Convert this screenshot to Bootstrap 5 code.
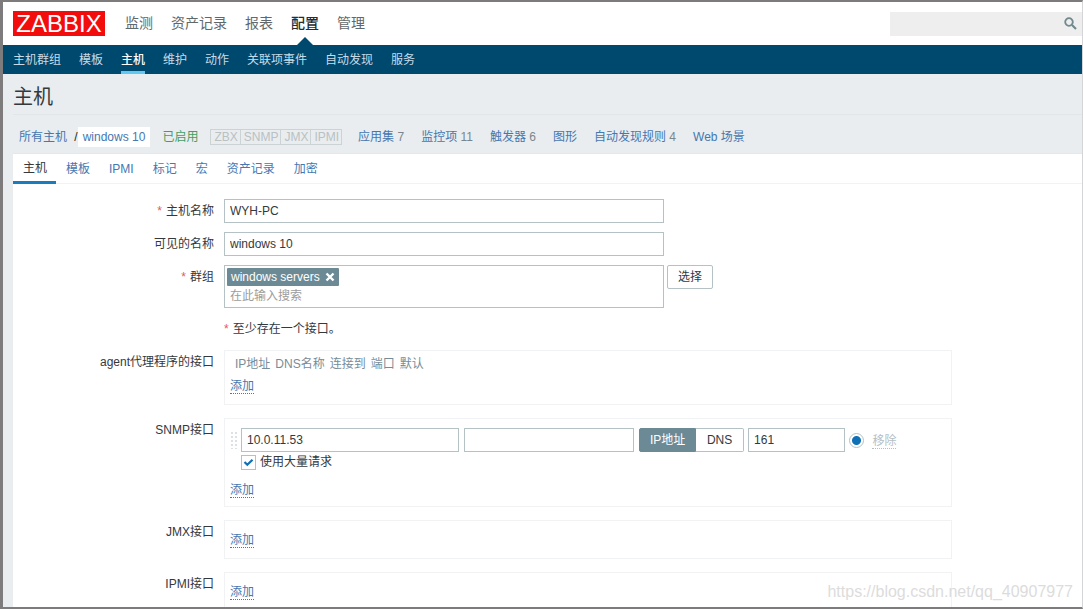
<!DOCTYPE html>
<html lang="zh-CN">
<head>
<meta charset="utf-8">
<meta name="viewport" content="width=device-width, initial-scale=1">
<title>主机</title>
<link href="https://cdn.jsdelivr.net/npm/bootstrap@5.3.0/dist/css/bootstrap.min.css" rel="stylesheet">
<style>
  body {
    font-family: "Liberation Sans", "Noto Sans CJK SC", sans-serif;
    font-size: 12px; line-height: 16px; color: #33393d; background: #fff;
  }
  a { color: #4577b0; text-decoration: none; }
  .frame { border: solid #7d7b7c; border-width: 2px 1px 2px 3px; border-right-color: #d3d5d6; background: #e9edef; }
  .topbar { height: 43px; padding-left: 10px; }
  .logo { background: #f20c0c; color: #fff; font-size: 24px; line-height: 25px; width: 92px; margin-right: 20px; }
  .main-menu { gap: 18px; font-size: 14px; line-height: 42px; height: 43px; }
  .main-menu a { color: #61686c; display: block; }
  .main-menu a.active { color: #262c30; font-weight: 500; position: relative; }
  .main-menu a.active::after {
    content: ""; position: absolute; bottom: 0; left: 50%; margin-left: -8px;
    border: 8px solid transparent; border-top: 0; border-bottom-color: #00496e;
  }
  .search-box { width: 192px; height: 24px; background: #eee; }
  .search-box input { background: none; padding: 0 6px; min-width: 0; }
  .search-box button { width: 24px; }
  .submenu { background: #00496e; gap: 18px; padding-left: 10px; height: 29px; line-height: 31px; }
  .submenu a { color: #c9dbe6; display: block; height: 29px; }
  .submenu a.active { color: #fff; font-weight: 500; border-bottom: 3px solid #62c8f0; }
  .page { padding-left: 10px; }
  h1 { font-size: 20px; line-height: 46px; height: 41px; color: #33393d; border-bottom: 1px solid #e2e6e8; font-weight: 400; }
  .crumbs { gap: 12px; padding: 11px 0 6px 6px; height: 38px; color: #7b868c; }
  .crumb-links { gap: 17px; margin-left: 4px; }
  .current-host { background: #fff; padding: 2px 5px; }
  .enabled { color: #429e61; }
  .proto { color: #b9c1c3; border: 1px solid #ccd3d5; line-height: 14px; }
  .proto span { padding: 0 2px 0 3px; }
  .proto span + span { border-left: 1px solid #ccd3d5; }
  .panel { background: #fff; border-top: 1px solid #e4e8ea; }
  .tabs { border-bottom: 1px solid #f0f2f3; line-height: 28px; }
  .tabs button { border: 0; background: none; color: #4577b0; padding: 0 9px 0 10px; height: 30px; margin-bottom: -1px; }
  .tabs button.active { color: #33393d; border-bottom: 3px solid #1a7cbd; }
  .host-form { display: grid; grid-template-columns: 201px minmax(0, 1fr); column-gap: 10px; row-gap: 9px; padding-top: 15px; }
  .row-label { text-align: right; line-height: 24px; }
  .required::before { content: "*"; color: #e45959; margin-right: 4px; }
  .field { border: 1px solid #b4c1c5; border-radius: 0; height: 24px; padding: 0 5px; color: #33393d; background: #fff; }
  .wide { width: 100%; max-width: 440px; }
  .multi { border: 1px solid #b4c1c5; height: 43px; padding: 2px; }
  .chip { background: #6b8a95; color: #fff; line-height: 18px; padding: 0 4px; gap: 5px; border-radius: 1px; }
  .multi input { padding: 0 3px; height: 20px; }
  .multi input::placeholder { color: #9c9c9c; opacity: 1; }
  .select-btn { border: 1px solid #b4c1c5; border-radius: 2px; background: #fff; height: 24px; width: 46px; color: #33393d; margin-left: 3px; }
  .iface { border: 1px solid #f0f2f3; max-width: 728px; padding: 10px 5px; margin-bottom: 4px; }
  .iface-label { line-height: 24px; }
  .iface-head { color: #768d99; gap: 5px; line-height: 6px; padding: 0 5px 10px; }
  .dotted { border-bottom: 1px dotted; line-height: 14px; padding-top: 2px; }
  .snmp { padding-top: 9px; padding-bottom: 8px; }
  .snmp-add { margin-top: 11px; }
  .handle { width: 7px; height: 18px; margin-right: 4px;
    background: radial-gradient(circle, #dce1e3 1px, transparent 1px) 0 0 / 4px 4px; }
  .seg { margin: 0 4px 0 5px; }
  .seg label { border: 1px solid #b4c1c5; line-height: 22px; width: 48px; text-align: center; cursor: pointer; }
  .seg label:first-of-type { width: 57px; border-radius: 2px 0 0 2px; }
  .seg label:last-of-type { border-radius: 0 2px 2px 0; border-left: 0; }
  .seg input:checked + label { background: #6b8a95; border-color: #6b8a95; color: #fff; }
  .ip-field { width: 30.4%; }
  .dns-field { width: 23.8%; margin-left: 5px; }
  .port-field { width: 13.6%; }
  .bulk { margin: 2px 0 0 11px; }
  .tick { appearance: none; width: 15px; height: 15px; border: 1px solid #b4c1c5; background: #fff; margin: 0; }
  .tick[type=radio] { border-radius: 50%; }
  .tick[type=radio]:checked { background: radial-gradient(circle, #0f70b7 4px, transparent 5px); }
  .tick[type=checkbox]:checked { background: url("data:image/svg+xml,%3Csvg xmlns='http://www.w3.org/2000/svg' viewBox='0 0 13 13'%3E%3Cpath d='M2.5 6 5.3 8.8 10.5 3.8' fill='none' stroke='%230f70b7' stroke-width='2.2'/%3E%3C/svg%3E"); }
  .removed { color: #b5c0c4; }
  .watermark { position: absolute; right: 9px; bottom: 5px; font-size: 16px; line-height: 20px; color: #dcdcdc; }
</style>
</head>
<body>
<div class="frame vh-100 d-flex flex-column overflow-hidden position-relative">
  <header class="topbar bg-white d-flex align-items-center flex-shrink-0">
    <a href="#" class="logo text-center">ZABBIX</a>
    <nav class="main-menu d-flex">
      <a href="#">监测</a><a href="#">资产记录</a><a href="#">报表</a><a href="#" class="active">配置</a><a href="#">管理</a>
    </nav>
    <form class="search-box d-flex ms-auto">
      <input type="search" class="border-0 flex-grow-1" aria-label="搜索">
      <button type="button" class="border-0 bg-transparent p-0 d-flex align-items-center justify-content-center" aria-label="搜索">
        <svg width="13" height="13" viewBox="0 0 13 13" fill="none" stroke="#71888c"><circle cx="5" cy="5" r="3.8" stroke-width="1.8"/><path d="M8 8l4 4" stroke-width="2.2"/></svg>
      </button>
    </form>
  </header>
  <nav class="submenu d-flex flex-shrink-0">
    <a href="#">主机群组</a><a href="#">模板</a><a href="#" class="active">主机</a><a href="#">维护</a><a href="#">动作</a><a href="#">关联项事件</a><a href="#">自动发现</a><a href="#">服务</a>
  </nav>
  <main class="page flex-grow-1 d-flex flex-column">
    <h1 class="m-0">主机</h1>
    <div class="crumbs d-flex align-items-center text-nowrap">
      <div class="d-flex align-items-center"><a href="#">所有主机</a><span class="ms-1 text-dark">&nbsp;/</span><a href="#" class="current-host">windows 10</a></div>
      <span class="enabled">已启用</span>
      <div class="proto d-flex"><span>ZBX</span><span>SNMP</span><span>JMX</span><span>IPMI</span></div>
      <div class="crumb-links d-flex">
        <span><a href="#">应用集</a> 7</span>
        <span><a href="#">监控项</a> 11</span>
        <span><a href="#">触发器</a> 6</span>
        <a href="#">图形</a>
        <span><a href="#">自动发现规则</a> 4</span>
        <a href="#">Web 场景</a>
      </div>
    </div>
    <section class="panel flex-grow-1">
      <div class="tabs d-flex" role="tablist">
        <button type="button" role="tab" class="active">主机</button><button type="button" role="tab">模板</button><button type="button" role="tab">IPMI</button><button type="button" role="tab">标记</button><button type="button" role="tab">宏</button><button type="button" role="tab">资产记录</button><button type="button" role="tab">加密</button>
      </div>
      <form class="host-form">
        <label class="row-label required" for="host">主机名称</label>
        <div><input id="host" class="field wide" value="WYH-PC"></div>
        <label class="row-label" for="visible">可见的名称</label>
        <div><input id="visible" class="field wide" value="windows 10"></div>
        <label class="row-label required" for="groups">群组</label>
        <div class="d-flex align-items-start">
          <div class="multi wide">
            <div class="d-flex"><span class="chip d-flex align-items-center">windows servers
              <button type="button" class="border-0 bg-transparent p-0 d-flex" aria-label="移除 windows servers"><svg width="10" height="10" viewBox="0 0 10 10" stroke="#fff" stroke-width="2.4"><path d="M1.5 1.5l7 7M8.5 1.5l-7 7"/></svg></button></span></div>
            <input id="groups" class="border-0 w-100 d-block" placeholder="在此输入搜索">
          </div>
          <button type="button" class="select-btn p-0">选择</button>
        </div>
        <div></div>
        <div class="required iface-label">至少存在一个接口。</div>

        <div class="row-label">agent代理程序的接口</div>
        <div class="iface">
          <div class="iface-head d-flex"><span>IP地址</span><span>DNS名称</span><span>连接到</span><span>端口</span><span>默认</span></div>
          <div class="d-flex"><a href="#" class="dotted">添加</a></div>
        </div>

        <div class="row-label">SNMP接口</div>
        <div class="iface snmp">
          <div class="d-flex align-items-center">
            <span class="handle"></span>
            <input class="field ip-field" value="10.0.11.53" aria-label="IP地址">
            <input class="field dns-field" aria-label="DNS名称">
            <div class="seg d-flex">
              <input type="radio" class="btn-check" name="connect" id="by-ip" checked><label for="by-ip">IP地址</label>
              <input type="radio" class="btn-check" name="connect" id="by-dns"><label for="by-dns">DNS</label>
            </div>
            <input class="field port-field" value="161" aria-label="端口">
            <input type="radio" class="tick ms-1" checked aria-label="默认">
            <span class="dotted removed ms-2">移除</span>
          </div>
          <div class="bulk d-flex align-items-center">
            <input type="checkbox" class="tick" id="bulk" checked><label for="bulk" class="ms-1">使用大量请求</label>
          </div>
          <div class="d-flex snmp-add"><a href="#" class="dotted">添加</a></div>
        </div>

        <div class="row-label">JMX接口</div>
        <div class="iface"><div class="d-flex"><a href="#" class="dotted">添加</a></div></div>

        <div class="row-label">IPMI接口</div>
        <div class="iface"><div class="d-flex"><a href="#" class="dotted">添加</a></div></div>
      </form>
    </section>
  </main>
  <div class="watermark">https://blog.csdn.net/qq_40907977</div>
</div>
<script src="https://cdn.jsdelivr.net/npm/bootstrap@5.3.0/dist/js/bootstrap.bundle.min.js"></script>
</body>
</html>
